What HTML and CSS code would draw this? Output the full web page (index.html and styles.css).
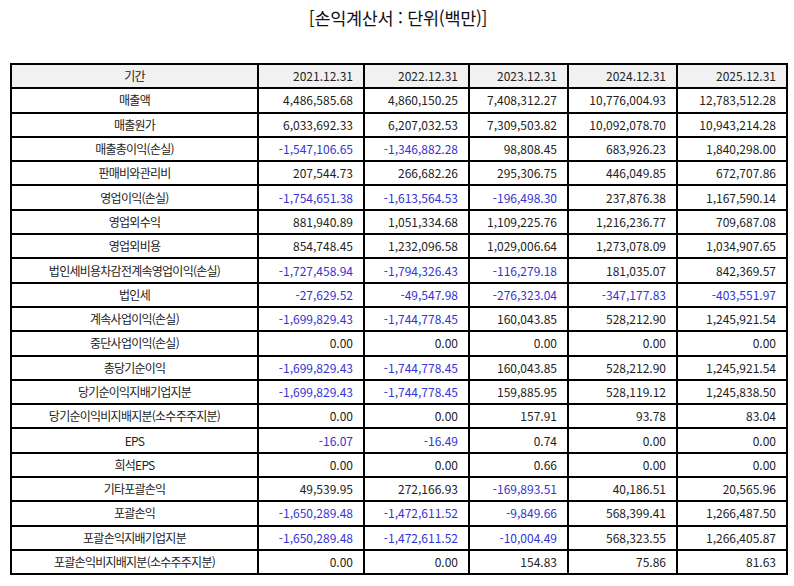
FILE: index.html
```html
<!DOCTYPE html>
<html lang="ko">
<head>
<meta charset="utf-8">
<title>손익계산서</title>
<link rel="stylesheet" href="styles.css">
</head>
<body>
<div class="page">
  <h1 class="title">[손익계산서 : 단위(백만)]</h1>
  <table class="fin">
    <colgroup>
      <col class="c-label"><col class="c-2021"><col class="c-2022"><col class="c-2023"><col class="c-2024"><col class="c-2025">
    </colgroup>
    <thead>
      <tr><th class="lbl">기간</th><th>2021.12.31</th><th>2022.12.31</th><th>2023.12.31</th><th>2024.12.31</th><th>2025.12.31</th></tr>
    </thead>
    <tbody>
      <tr><td class="lbl">매출액</td><td>4,486,585.68</td><td>4,860,150.25</td><td>7,408,312.27</td><td>10,776,004.93</td><td>12,783,512.28</td></tr>
      <tr><td class="lbl">매출원가</td><td>6,033,692.33</td><td>6,207,032.53</td><td>7,309,503.82</td><td>10,092,078.70</td><td>10,943,214.28</td></tr>
      <tr><td class="lbl">매출총이익(손실)</td><td class="neg">-1,547,106.65</td><td class="neg">-1,346,882.28</td><td>98,808.45</td><td>683,926.23</td><td>1,840,298.00</td></tr>
      <tr><td class="lbl">판매비와관리비</td><td>207,544.73</td><td>266,682.26</td><td>295,306.75</td><td>446,049.85</td><td>672,707.86</td></tr>
      <tr><td class="lbl">영업이익(손실)</td><td class="neg">-1,754,651.38</td><td class="neg">-1,613,564.53</td><td class="neg">-196,498.30</td><td>237,876.38</td><td>1,167,590.14</td></tr>
      <tr><td class="lbl">영업외수익</td><td>881,940.89</td><td>1,051,334.68</td><td>1,109,225.76</td><td>1,216,236.77</td><td>709,687.08</td></tr>
      <tr><td class="lbl">영업외비용</td><td>854,748.45</td><td>1,232,096.58</td><td>1,029,006.64</td><td>1,273,078.09</td><td>1,034,907.65</td></tr>
      <tr><td class="lbl">법인세비용차감전계속영업이익(손실)</td><td class="neg">-1,727,458.94</td><td class="neg">-1,794,326.43</td><td class="neg">-116,279.18</td><td>181,035.07</td><td>842,369.57</td></tr>
      <tr><td class="lbl">법인세</td><td class="neg">-27,629.52</td><td class="neg">-49,547.98</td><td class="neg">-276,323.04</td><td class="neg">-347,177.83</td><td class="neg">-403,551.97</td></tr>
      <tr><td class="lbl">계속사업이익(손실)</td><td class="neg">-1,699,829.43</td><td class="neg">-1,744,778.45</td><td>160,043.85</td><td>528,212.90</td><td>1,245,921.54</td></tr>
      <tr><td class="lbl">중단사업이익(손실)</td><td>0.00</td><td>0.00</td><td>0.00</td><td>0.00</td><td>0.00</td></tr>
      <tr><td class="lbl">총당기순이익</td><td class="neg">-1,699,829.43</td><td class="neg">-1,744,778.45</td><td>160,043.85</td><td>528,212.90</td><td>1,245,921.54</td></tr>
      <tr><td class="lbl">당기순이익지배기업지분</td><td class="neg">-1,699,829.43</td><td class="neg">-1,744,778.45</td><td>159,885.95</td><td>528,119.12</td><td>1,245,838.50</td></tr>
      <tr><td class="lbl">당기순이익비지배지분(소수주주지분)</td><td>0.00</td><td>0.00</td><td>157.91</td><td>93.78</td><td>83.04</td></tr>
      <tr><td class="lbl">EPS</td><td class="neg">-16.07</td><td class="neg">-16.49</td><td>0.74</td><td>0.00</td><td>0.00</td></tr>
      <tr><td class="lbl">희석EPS</td><td>0.00</td><td>0.00</td><td>0.66</td><td>0.00</td><td>0.00</td></tr>
      <tr><td class="lbl">기타포괄손익</td><td>49,539.95</td><td>272,166.93</td><td class="neg">-169,893.51</td><td>40,186.51</td><td>20,565.96</td></tr>
      <tr><td class="lbl">포괄손익</td><td class="neg">-1,650,289.48</td><td class="neg">-1,472,611.52</td><td class="neg">-9,849.66</td><td>568,399.41</td><td>1,266,487.50</td></tr>
      <tr><td class="lbl">포괄손익지배기업지분</td><td class="neg">-1,650,289.48</td><td class="neg">-1,472,611.52</td><td class="neg">-10,004.49</td><td>568,323.55</td><td>1,266,405.87</td></tr>
      <tr><td class="lbl">포괄손익비지배지분(소수주주지분)</td><td>0.00</td><td>0.00</td><td>154.83</td><td>75.86</td><td>81.63</td></tr>
    </tbody>
  </table>
</div>
</body>
</html>
```

FILE: styles.css
```css
html, body {
  margin: 0;
  padding: 0;
  background: #ffffff;
}

body {
  font-family: "Noto Sans CJK KR", "Noto Sans", sans-serif;
  color: #222222;
}

.page {
  padding: 5px 8px 0 10px;
}

.title {
  margin: 0 0 32px;
  font-size: 17.5px;
  line-height: 26px;
  font-weight: 400;
  letter-spacing: -0.3px;
  text-align: center;
  color: #111111;
}

.fin {
  width: 776px;
  border-collapse: collapse;
  table-layout: fixed;
  border: 2px solid #000000;
}

.c-label { width: 247px; }
.c-2021 { width: 106px; }
.c-2022 { width: 105px; }
.c-2023 { width: 99px; }
.c-2024 { width: 109px; }
.c-2025 { width: 110px; }

.fin th,
.fin td {
  border: 2px solid #000000;
  height: 24.3px;
  padding: 0 10px 0 4px;
  font-size: 12px;
  line-height: 16px;
  font-weight: 400;
  text-align: right;
  white-space: nowrap;
  box-sizing: border-box;
}

.fin th {
  background: #f1f1f1;
}

.fin .lbl {
  text-align: center;
  padding: 0 4px;
  font-size: 12px;
  letter-spacing: -0.75px;
}

.fin .neg {
  color: #3434d2;
}
```
